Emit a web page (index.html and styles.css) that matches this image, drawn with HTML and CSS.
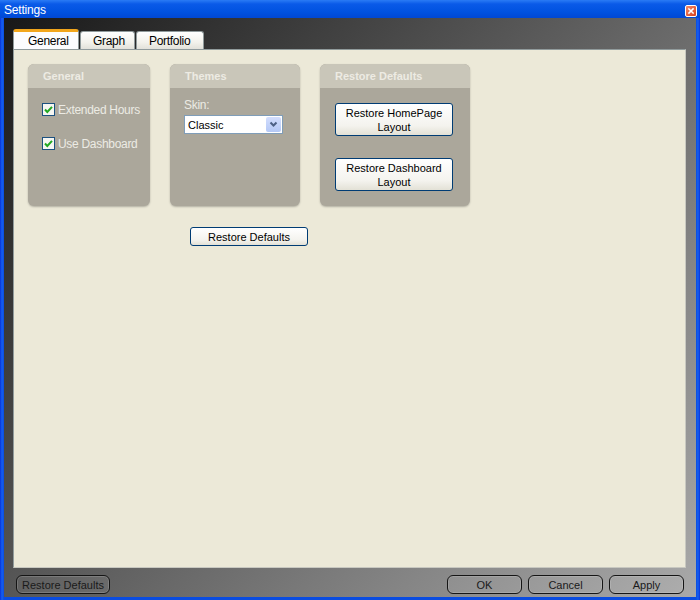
FILE: index.html
```html
<!DOCTYPE html>
<html>
<head>
<meta charset="utf-8">
<title>Settings</title>
<link rel="stylesheet" href="styles.css">
</head>
<body>
<div class="window">
  <div class="titlebar">
    <span class="title">Settings</span>
    <span class="close">
      <svg width="12" height="12" viewBox="0 0 12 12"><path d="M3.5 3.5 L8.5 8.5 M8.5 3.5 L3.5 8.5" stroke="#fff" stroke-width="1.8" stroke-linecap="square"/></svg>
    </span>
  </div>
  <div class="frame">
    <div class="tabs">
      <div class="tab active">General</div>
      <div class="tab">Graph</div>
      <div class="tab">Portfolio</div>
    </div>
    <div class="panel">
      <div class="groups">
        <div class="group g-general">
          <div class="group-head">General</div>
          <div class="group-body checks">
            <label class="check"><span class="box"><svg width="11" height="11" viewBox="0 0 11 11"><path d="M2 5.5 L4.3 8 L9 2.8" fill="none" stroke="#22a822" stroke-width="2"/></svg></span>Extended Hours</label>
            <label class="check"><span class="box"><svg width="11" height="11" viewBox="0 0 11 11"><path d="M2 5.5 L4.3 8 L9 2.8" fill="none" stroke="#22a822" stroke-width="2"/></svg></span>Use Dashboard</label>
          </div>
        </div>
        <div class="group g-themes">
          <div class="group-head">Themes</div>
          <div class="group-body">
            <div class="skin-label">Skin:</div>
            <div class="select">
              <span class="select-text">Classic</span>
              <span class="select-btn"><svg width="9" height="7" viewBox="0 0 9 7"><path d="M1.5 1.5 L4.5 4.5 L7.5 1.5" fill="none" stroke="#4d6185" stroke-width="2"/></svg></span>
            </div>
          </div>
        </div>
        <div class="group g-restore">
          <div class="group-head">Restore Defaults</div>
          <div class="group-body restore-body">
            <button class="btn tall">Restore HomePage<br>Layout</button>
            <button class="btn tall">Restore Dashboard<br>Layout</button>
          </div>
        </div>
      </div>
      <div class="panel-actions">
        <button class="btn wide">Restore Defaults</button>
      </div>
    </div>
    <div class="footer">
      <button class="dbtn restore">Restore Defaults</button>
      <div class="spacer"></div>
      <button class="dbtn">OK</button>
      <button class="dbtn">Cancel</button>
      <button class="dbtn">Apply</button>
    </div>
  </div>
</div>
</body>
</html>
```

FILE: styles.css
```css
html, body {
  margin: 0;
  padding: 0;
}
body {
  width: 700px;
  height: 600px;
  overflow: hidden;
  font-family: "Liberation Sans", Arial, sans-serif;
  font-size: 11px;
}
.window {
  width: 700px;
  height: 600px;
  display: flex;
  flex-direction: column;
  background: linear-gradient(to right, #0831d9 0px, #1660f0 2px, #0a4ce0 4px, #0a4ce0 696px, #1660f0 698px, #0831d9 700px);
  box-sizing: border-box;
  padding-bottom: 3px;
}
.titlebar {
  height: 18px;
  flex: none;
  display: flex;
  align-items: center;
  padding: 0 3px 0 4px;
  background: linear-gradient(to bottom, #2a7bf5 0px, #0a5ae8 4px, #0052e0 12px, #0048d4 18px);
  color: #fff;
}
.title {
  font-size: 12px;
  letter-spacing: -0.2px;
  flex: 1;
  padding-top: 1px;
}
.close {
  width: 12px;
  height: 12px;
  border: 1px solid #fff;
  border-radius: 2px;
  background: linear-gradient(135deg, #f08a6a, #d8401c);
  box-sizing: border-box;
  display: flex;
  align-items: center;
  justify-content: center;
  margin-top: 3px;
}
.close svg { width: 10px; height: 10px; }
.frame {
  flex: 1;
  margin: 0 4px 0 4px;
  display: flex;
  flex-direction: column;
  padding: 11px 10px 0 9px;
  background: linear-gradient(132deg, #181818 0%, #a9a9a9 100%);
  box-sizing: border-box;
}
.tabs {
  display: flex;
  height: 20px;
  gap: 1px;
  align-items: flex-end;
}
.tab {
  height: 18px;
  padding: 0 13px;
  box-sizing: border-box;
  border: 1px solid #919b9c;
  border-bottom: none;
  border-radius: 3px 3px 0 0;
  background: linear-gradient(to bottom, #ffffff, #f3f2ec 60%, #e2e1da);
  display: flex;
  align-items: center;
  color: #000;
  font-size: 12px;
  letter-spacing: -0.3px;
}
.tab.active {
  height: 20px;
  width: 66px;
  padding: 0 0 0 14px;
  background: #fcfcfe;
  border-top: 3px solid #f2a61c;
  border-radius: 3px 3px 0 0;
}
.tab:nth-child(2) { width: 55px; padding-left: 12px; }
.tab:nth-child(3) { width: 68px; padding-left: 12px; }
.panel {
  flex: 1;
  background: #ece9d8;
  border: 1px solid #919b9c;
  border-right-color: #c8c8c0;
  border-bottom-color: #c8c8c0;
  padding: 14px 14px;
  box-sizing: border-box;
}
.groups {
  display: flex;
  gap: 20px;
  align-items: flex-start;
}
.group {
  height: 142px;
  border-radius: 6px;
  background: #aba79b;
  display: flex;
  flex-direction: column;
  box-shadow: 0 1px 2px rgba(0,0,0,0.25);
  overflow: hidden;
}
.g-general { width: 122px; }
.g-themes { width: 130px; }
.g-restore { width: 150px; }
.group-head {
  height: 24px;
  flex: none;
  background: #c9c6b9;
  color: #edebe3;
  font-weight: bold;
  font-size: 11px;
  padding-left: 15px;
  display: flex;
  align-items: center;
}
.group-body {
  flex: 1;
  color: #ecebe4;
  font-size: 12px;
}
.checks {
  padding: 15px 0 0 14px;
  display: flex;
  flex-direction: column;
  gap: 21px;
}
.check {
  display: flex;
  align-items: center;
  height: 13px;
  letter-spacing: -0.3px;
}
.box {
  width: 13px;
  height: 13px;
  box-sizing: border-box;
  border: 1px solid #1c5180;
  background: #f6f6f2;
  display: flex;
  align-items: center;
  justify-content: center;
  margin-right: 3px;
}
.g-themes .group-body {
  padding: 10px 0 0 14px;
}
.skin-label {
  height: 17px;
  line-height: 14px;
  letter-spacing: -0.3px;
}
.select {
  width: 99px;
  height: 19px;
  box-sizing: border-box;
  border: 1px solid #7f9db9;
  background: #fff;
  display: flex;
  align-items: center;
  justify-content: space-between;
  padding: 0 1px 0 3px;
  color: #000;
}
.select-text { font-size: 11px; }
.select-btn {
  width: 15px;
  height: 15px;
  background: linear-gradient(to bottom, #d3defd, #b4c8f6);
  border-radius: 2px;
  display: flex;
  align-items: center;
  justify-content: center;
}
.restore-body {
  padding: 15px 0 0 15px;
  display: flex;
  flex-direction: column;
  gap: 22px;
}
.btn {
  font-family: "Liberation Sans", Arial, sans-serif;
  font-size: 11px;
  color: #000;
  border: 1px solid #003c74;
  border-radius: 3px;
  background: linear-gradient(to bottom, #ffffff, #f4f3ee 70%, #e3e1d6);
  padding: 0;
  margin: 0;
  line-height: 14px;
  text-align: center;
}
.btn.tall {
  width: 118px;
  height: 33px;
}
.panel-actions {
  padding: 21px 0 0 162px;
}
.btn.wide {
  width: 118px;
  height: 19px;
}
.footer {
  height: 29px;
  flex: none;
  display: flex;
  align-items: flex-start;
  padding: 7px 2px 0 3px;
  box-sizing: border-box;
  gap: 6px;
}
.spacer { flex: 1; }
.dbtn {
  width: 75px;
  height: 19px;
  border: 1px solid #151515;
  border-radius: 6px;
  background: rgba(255,255,255,0.06);
  box-shadow: inset 0 0 0 1px rgba(255,255,255,0.15);
  color: #1a1a1a;
  font-family: "Liberation Sans", Arial, sans-serif;
  font-size: 11px;
  padding: 0;
  margin: 0;
}
.dbtn.restore { width: 94px; }
```
